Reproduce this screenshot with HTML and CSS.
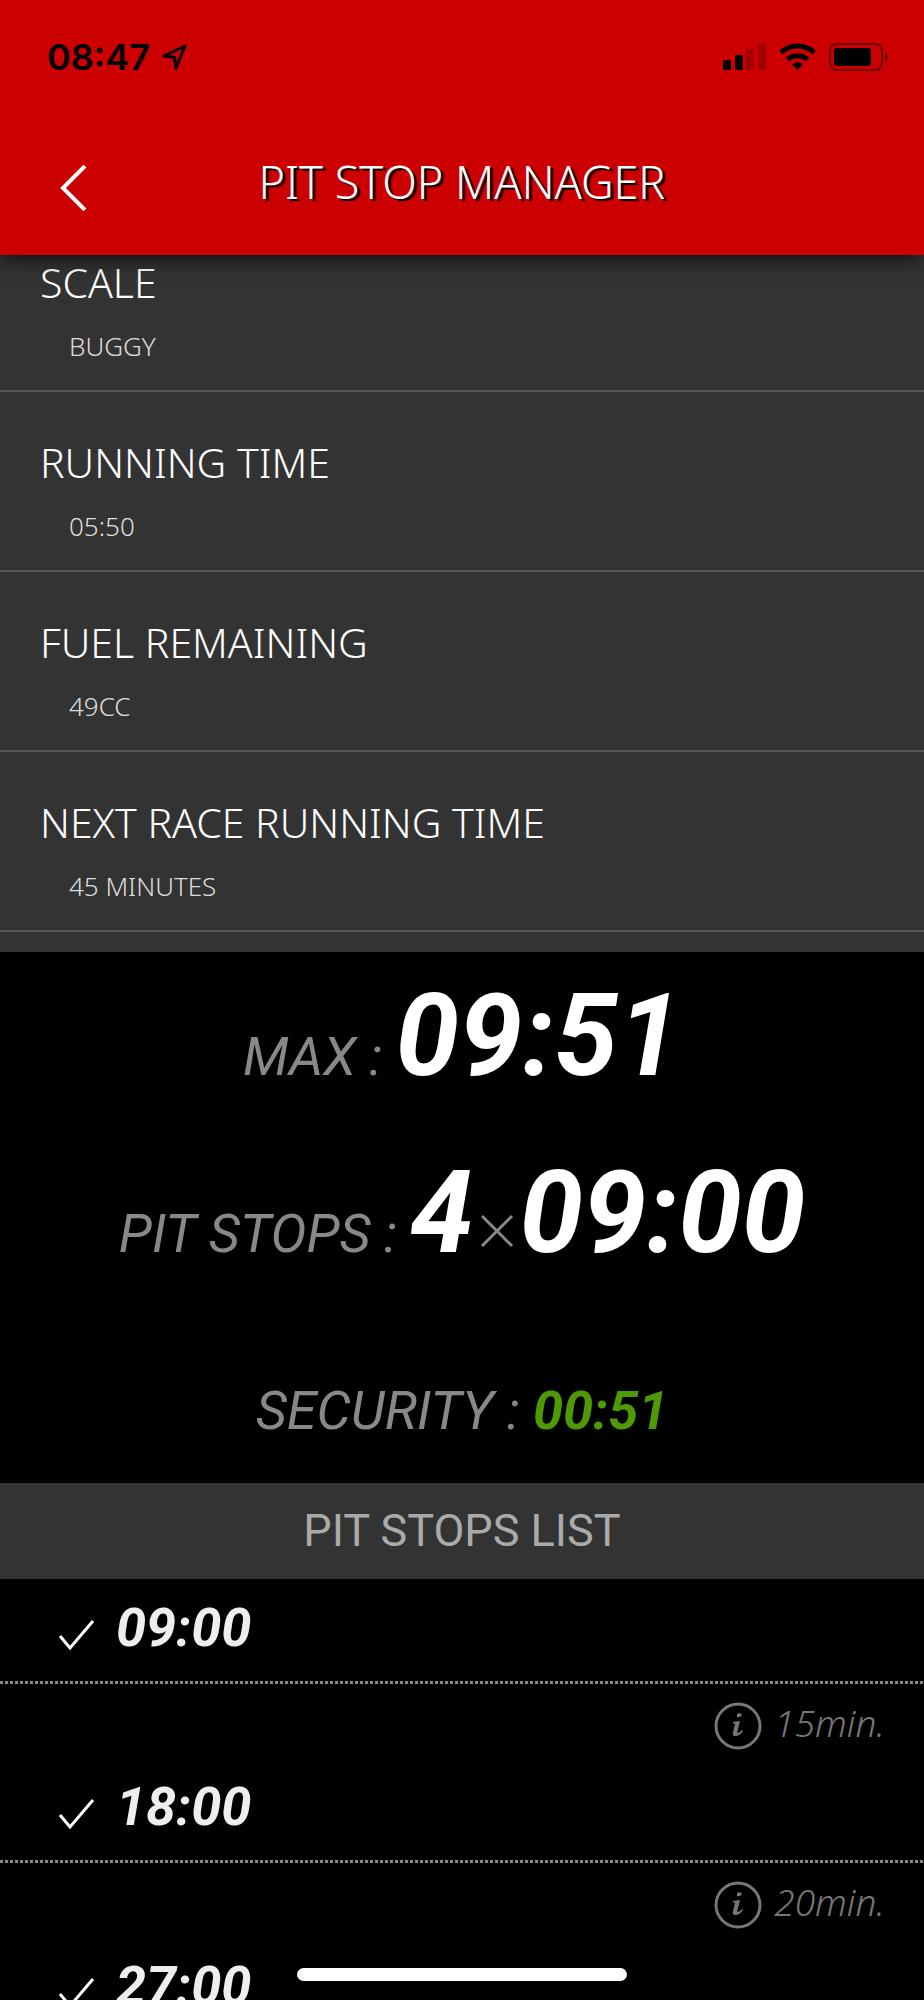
FILE: index.html
```html
<!DOCTYPE html>
<html lang="en">
<head>
    <meta charset="UTF-8">
    <meta name="viewport" content="width=device-width, initial-scale=1.0">
    <title>Pit Stop Manager</title>
    <link rel="stylesheet" href="styles.css">
</head>
<body>
    <header>
        <div class="status-bar">
            <span class="clock">08:47</span>
            <svg class="location" width="26" height="28" viewBox="0 0 26 28" fill="none" stroke="#000" stroke-width="3" stroke-linejoin="round"><path d="M2 13 L23 3 L14 25 L12.500 14.500 Z"/></svg>
            <div class="status-icons">
                <svg width="43" height="28" viewBox="0 0 43 28">
                    <rect x="0" y="17" width="8" height="10" rx="2"/>
                    <rect x="12" y="12" width="8" height="15" rx="2"/>
                    <rect x="23" y="6" width="8" height="21" rx="2" opacity=".2"/>
                    <rect x="35" y="0" width="8" height="27" rx="2" opacity=".2"/>
                </svg>
                <svg width="37" height="28" viewBox="0 0 37 28">
                    <path d="M2 9.500 A24 24 0 0 1 35 9.500" fill="none" stroke="#000" stroke-width="5"/>
                    <path d="M8.500 16.500 A15 15 0 0 1 28.500 16.500" fill="none" stroke="#000" stroke-width="5"/>
                    <path d="M13 21.500 Q18.500 16.500 24 21.500 L18.500 27 Z"/>
                </svg>
                <svg width="60" height="28" viewBox="0 0 60 28">
                    <rect x="1" y="1" width="52" height="26" rx="7" fill="none" stroke="#000" stroke-width="2" opacity=".45"/>
                    <rect x="5" y="5" width="37" height="18" rx="3"/>
                    <path d="M56 9 Q59 11 59 14 Q59 17 56 19 Z" opacity=".45"/>
                </svg>
            </div>
        </div>
        <nav>
            <a href="#" class="back" aria-label="Back">
                <svg width="27" height="46" viewBox="0 0 27 46" fill="none" stroke="#fff" stroke-width="4"><path d="M25 1 L3 23 L25 45"/></svg>
            </a>
            <h1>PIT STOP MANAGER</h1>
        </nav>
    </header>

    <main>
        <dl class="settings">
            <div class="setting">
                <dt>SCALE</dt>
                <dd>BUGGY</dd>
            </div>
            <div class="setting">
                <dt>RUNNING TIME</dt>
                <dd>05:50</dd>
            </div>
            <div class="setting">
                <dt>FUEL REMAINING</dt>
                <dd>49CC</dd>
            </div>
            <div class="setting">
                <dt>NEXT RACE RUNNING TIME</dt>
                <dd>45 MINUTES</dd>
            </div>
        </dl>

        <section class="results">
            <p><span class="label">MAX : </span>09:51</p>
            <p><span class="label">PIT STOPS : </span>4<svg class="times" width="46" height="38" viewBox="0 0 46 38" stroke="#888" stroke-width="3"><path d="M8 2 L38 32 M38 2 L8 32"/></svg>09:00</p>
            <p><span class="label">SECURITY : </span><span class="security">00:51</span></p>
        </section>

        <h2>PIT STOPS LIST</h2>
        <ul class="stops">
            <li>
                <div class="stop">
                    <svg width="36" height="32" viewBox="0 0 36 32" fill="none" stroke="#fff" stroke-width="3"><path d="M1 17 L11 29 L34 2"/></svg>
                    <time>09:00</time>
                </div>
                <div class="note">
                    <svg width="48" height="48" viewBox="0 0 48 48"><circle cx="24" cy="24" r="22" fill="none" stroke="#777" stroke-width="3"/><path d="M23 12 Q27 10 28 13 Q26 16 23 15 Z M19 20 L26 19 L23 31 Q26 31 28 28 L29 29 Q26 34 21 34 Q18 34 19 30 L21 22 L19 21 Z" fill="#777"/></svg>
                    <span>15min.</span>
                </div>
            </li>
            <li>
                <div class="stop">
                    <svg width="36" height="32" viewBox="0 0 36 32" fill="none" stroke="#fff" stroke-width="3"><path d="M1 17 L11 29 L34 2"/></svg>
                    <time>18:00</time>
                </div>
                <div class="note">
                    <svg width="48" height="48" viewBox="0 0 48 48"><circle cx="24" cy="24" r="22" fill="none" stroke="#777" stroke-width="3"/><path d="M23 12 Q27 10 28 13 Q26 16 23 15 Z M19 20 L26 19 L23 31 Q26 31 28 28 L29 29 Q26 34 21 34 Q18 34 19 30 L21 22 L19 21 Z" fill="#777"/></svg>
                    <span>20min.</span>
                </div>
            </li>
            <li>
                <div class="stop">
                    <svg width="36" height="32" viewBox="0 0 36 32" fill="none" stroke="#fff" stroke-width="3"><path d="M1 17 L11 29 L34 2"/></svg>
                    <time>27:00</time>
                </div>
            </li>
        </ul>
    </main>
    <div class="home-indicator"></div>
</body>
</html>
```
FILE: styles.css
```css
* {
    box-sizing: border-box;
    margin: 0;
    padding: 0;
}

body {
    display: flex;
    flex-direction: column;
    height: 100vh;
    overflow: hidden;
    font-family: 'Noto Sans', 'Open Sans', sans-serif;
    font-weight: 300;
    background: #000;
    color: #fff;
}

svg {
    flex: none;
}

header {
    position: relative;
    z-index: 1;
    flex: none;
    padding: 30px 35px 44px 47px;
    background: #c00;
    box-shadow: 0 4px 20px rgba(0, 0, 0, 0.7);
}

/* Status bar */
.status-bar {
    display: flex;
    align-items: center;
    gap: 12px;
    height: 54px;
    color: #000;
}

.clock {
    font-family: 'Inter', sans-serif;
    font-size: 36px;
    font-weight: 600;
}

.status-icons {
    display: flex;
    gap: 13px;
    margin-left: auto;
}

nav {
    display: grid;
    grid-template-columns: 60px 1fr 72px;
    align-items: end;
    padding-top: 69px;
}

.back {
    display: flex;
    padding-left: 13px;
}

h1 {
    font-size: 45px;
    font-weight: 300;
    line-height: 58px;
    text-align: center;
    text-shadow: 3px 2px 1px #000;
}

main {
    flex: 1;
    overflow: hidden;
}

/* Race settings, scrolled a little under the header */
.settings {
    margin-top: -43px;
    padding-bottom: 20px;
    background: #333;
}

.setting {
    padding: 44px 40px 26px;
    border-bottom: 2px solid #555;
}

dt {
    font-size: 41px;
    line-height: 52px;
}

dd {
    margin-top: 20px;
    padding-left: 29px;
    font-size: 26px;
    line-height: 36px;
    color: #ddd;
}

/* LCD readout */
.results p,
time {
    font-family: 'Roboto', sans-serif;
    font-style: italic;
    font-weight: bold;
}

.results p {
    padding-bottom: 8px;
    font-size: 114px;
    line-height: 169px;
    text-align: center;
    white-space: nowrap;
}

.results .label,
.results .security {
    font-size: 54px;
    line-height: 1;
}

.results .label {
    font-weight: normal;
    color: #888;
}

.security {
    color: #4e9a06;
}

.times {
    vertical-align: baseline;
}

h2 {
    font-family: 'Roboto', sans-serif;
    font-size: 45px;
    font-weight: normal;
    line-height: 96px;
    text-align: center;
    color: #aaa;
    background: #333;
}

.stops {
    list-style: none;
}

.stop {
    display: flex;
    align-items: center;
    gap: 21px;
    height: 105px;
    padding: 0 59px 7px;
    background: repeating-linear-gradient(to right, #888 0 3px, transparent 3px 5px) left bottom / 100% 3px no-repeat;
}

.stop svg {
    margin-top: 14px;
}

time {
    font-size: 54px;
    line-height: 60px;
    color: #eee;
}

.note {
    display: flex;
    justify-content: flex-end;
    gap: 12px;
    height: 74px;
    padding: 18px 39px 0;
    font-size: 37px;
    font-style: italic;
    line-height: 42px;
    color: #777;
}

.home-indicator {
    position: fixed;
    bottom: 19px;
    left: 50%;
    width: 330px;
    height: 13px;
    margin-left: -165px;
    border-radius: 7px;
    background: #fff;
}
```
